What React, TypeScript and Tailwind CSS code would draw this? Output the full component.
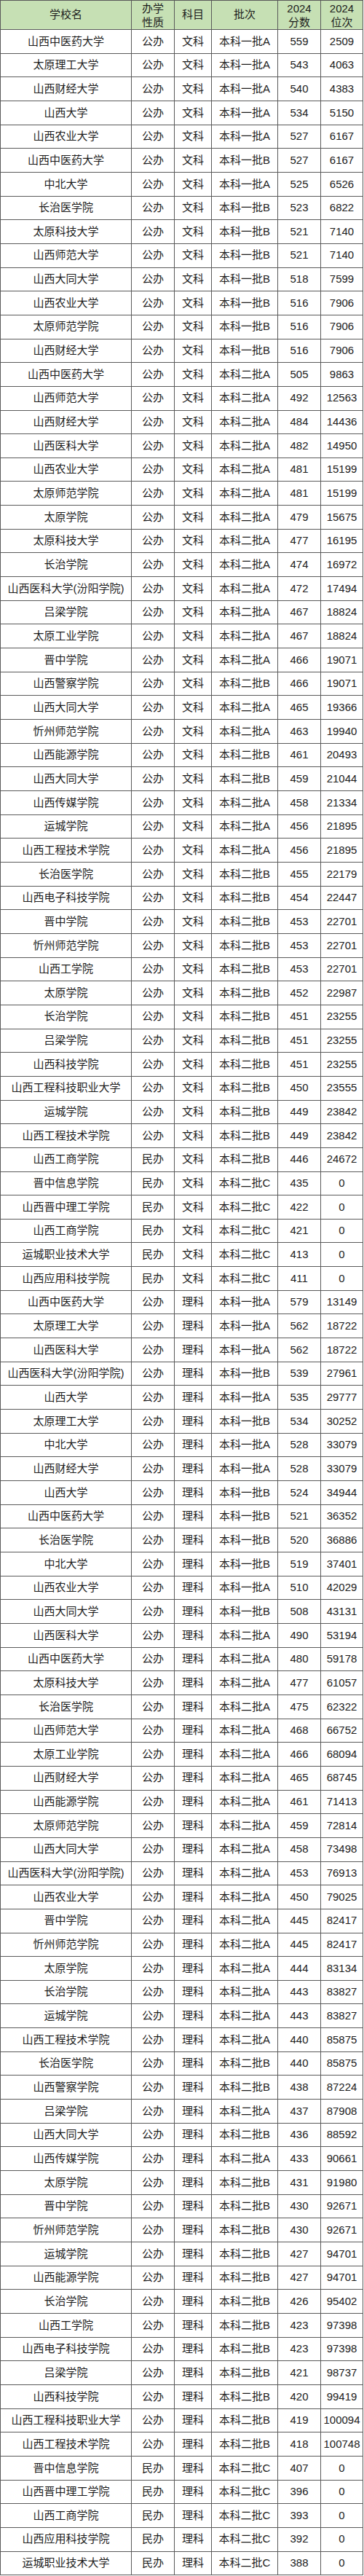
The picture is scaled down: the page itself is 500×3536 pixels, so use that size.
import React from "react";

type Row = [string, string, string, string, string];

const wen: Row[] = [
  ["山西中医药大学", "公办", "本科一批A", "559", "2509"],
  ["太原理工大学", "公办", "本科一批A", "543", "4063"],
  ["山西财经大学", "公办", "本科一批A", "540", "4383"],
  ["山西大学", "公办", "本科一批A", "534", "5150"],
  ["山西农业大学", "公办", "本科一批A", "527", "6167"],
  ["山西中医药大学", "公办", "本科一批B", "527", "6167"],
  ["中北大学", "公办", "本科一批A", "525", "6526"],
  ["长治医学院", "公办", "本科一批B", "523", "6822"],
  ["太原科技大学", "公办", "本科一批B", "521", "7140"],
  ["山西师范大学", "公办", "本科一批B", "521", "7140"],
  ["山西大同大学", "公办", "本科一批B", "518", "7599"],
  ["山西农业大学", "公办", "本科一批B", "516", "7906"],
  ["太原师范学院", "公办", "本科一批B", "516", "7906"],
  ["山西财经大学", "公办", "本科一批B", "516", "7906"],
  ["山西中医药大学", "公办", "本科二批A", "505", "9863"],
  ["山西师范大学", "公办", "本科二批A", "492", "12563"],
  ["山西财经大学", "公办", "本科二批A", "484", "14436"],
  ["山西医科大学", "公办", "本科二批A", "482", "14950"],
  ["山西农业大学", "公办", "本科二批A", "481", "15199"],
  ["太原师范学院", "公办", "本科二批A", "481", "15199"],
  ["太原学院", "公办", "本科二批A", "479", "15675"],
  ["太原科技大学", "公办", "本科二批A", "477", "16195"],
  ["长治学院", "公办", "本科二批A", "474", "16972"],
  ["山西医科大学(汾阳学院)", "公办", "本科二批A", "472", "17494"],
  ["吕梁学院", "公办", "本科二批A", "467", "18824"],
  ["太原工业学院", "公办", "本科二批A", "467", "18824"],
  ["晋中学院", "公办", "本科二批A", "466", "19071"],
  ["山西警察学院", "公办", "本科二批B", "466", "19071"],
  ["山西大同大学", "公办", "本科二批A", "465", "19366"],
  ["忻州师范学院", "公办", "本科二批A", "463", "19940"],
  ["山西能源学院", "公办", "本科二批B", "461", "20493"],
  ["山西大同大学", "公办", "本科二批B", "459", "21044"],
  ["山西传媒学院", "公办", "本科二批A", "458", "21334"],
  ["运城学院", "公办", "本科二批A", "456", "21895"],
  ["山西工程技术学院", "公办", "本科二批A", "456", "21895"],
  ["长治医学院", "公办", "本科二批B", "455", "22179"],
  ["山西电子科技学院", "公办", "本科二批B", "454", "22447"],
  ["晋中学院", "公办", "本科二批B", "453", "22701"],
  ["忻州师范学院", "公办", "本科二批B", "453", "22701"],
  ["山西工学院", "公办", "本科二批B", "453", "22701"],
  ["太原学院", "公办", "本科二批B", "452", "22987"],
  ["长治学院", "公办", "本科二批B", "451", "23255"],
  ["吕梁学院", "公办", "本科二批B", "451", "23255"],
  ["山西科技学院", "公办", "本科二批B", "451", "23255"],
  ["山西工程科技职业大学", "公办", "本科二批B", "450", "23555"],
  ["运城学院", "公办", "本科二批B", "449", "23842"],
  ["山西工程技术学院", "公办", "本科二批B", "449", "23842"],
  ["山西工商学院", "民办", "本科二批B", "446", "24672"],
  ["晋中信息学院", "民办", "本科二批C", "435", "0"],
  ["山西晋中理工学院", "民办", "本科二批C", "422", "0"],
  ["山西工商学院", "民办", "本科二批C", "421", "0"],
  ["运城职业技术大学", "民办", "本科二批C", "413", "0"],
  ["山西应用科技学院", "民办", "本科二批C", "411", "0"],
];

const li: Row[] = [
  ["山西中医药大学", "公办", "本科一批A", "579", "13149"],
  ["太原理工大学", "公办", "本科一批A", "562", "18722"],
  ["山西医科大学", "公办", "本科一批A", "562", "18722"],
  ["山西医科大学(汾阳学院)", "公办", "本科一批B", "539", "27961"],
  ["山西大学", "公办", "本科一批A", "535", "29777"],
  ["太原理工大学", "公办", "本科一批B", "534", "30252"],
  ["中北大学", "公办", "本科一批A", "528", "33079"],
  ["山西财经大学", "公办", "本科一批A", "528", "33079"],
  ["山西大学", "公办", "本科一批B", "524", "34944"],
  ["山西中医药大学", "公办", "本科一批B", "521", "36352"],
  ["长治医学院", "公办", "本科一批B", "520", "36886"],
  ["中北大学", "公办", "本科一批B", "519", "37401"],
  ["山西农业大学", "公办", "本科一批A", "510", "42029"],
  ["山西大同大学", "公办", "本科一批B", "508", "43131"],
  ["山西医科大学", "公办", "本科二批A", "490", "53194"],
  ["山西中医药大学", "公办", "本科二批A", "480", "59178"],
  ["太原科技大学", "公办", "本科二批A", "477", "61057"],
  ["长治医学院", "公办", "本科二批A", "475", "62322"],
  ["山西师范大学", "公办", "本科二批A", "468", "66752"],
  ["太原工业学院", "公办", "本科二批A", "466", "68094"],
  ["山西财经大学", "公办", "本科二批A", "465", "68745"],
  ["山西能源学院", "公办", "本科二批A", "461", "71413"],
  ["太原师范学院", "公办", "本科二批A", "459", "72814"],
  ["山西大同大学", "公办", "本科二批A", "458", "73498"],
  ["山西医科大学(汾阳学院)", "公办", "本科二批A", "453", "76913"],
  ["山西农业大学", "公办", "本科二批A", "450", "79025"],
  ["晋中学院", "公办", "本科二批A", "445", "82417"],
  ["忻州师范学院", "公办", "本科二批A", "445", "82417"],
  ["太原学院", "公办", "本科二批A", "444", "83134"],
  ["长治学院", "公办", "本科二批A", "443", "83827"],
  ["运城学院", "公办", "本科二批A", "443", "83827"],
  ["山西工程技术学院", "公办", "本科二批A", "440", "85875"],
  ["长治医学院", "公办", "本科二批B", "440", "85875"],
  ["山西警察学院", "公办", "本科二批B", "438", "87224"],
  ["吕梁学院", "公办", "本科二批A", "437", "87908"],
  ["山西大同大学", "公办", "本科二批B", "436", "88592"],
  ["山西传媒学院", "公办", "本科二批A", "433", "90661"],
  ["太原学院", "公办", "本科二批B", "431", "91980"],
  ["晋中学院", "公办", "本科二批B", "430", "92671"],
  ["忻州师范学院", "公办", "本科二批B", "430", "92671"],
  ["运城学院", "公办", "本科二批B", "427", "94701"],
  ["山西能源学院", "公办", "本科二批B", "427", "94701"],
  ["长治学院", "公办", "本科二批B", "426", "95402"],
  ["山西工学院", "公办", "本科二批B", "423", "97398"],
  ["山西电子科技学院", "公办", "本科二批B", "423", "97398"],
  ["吕梁学院", "公办", "本科二批B", "421", "98737"],
  ["山西科技学院", "公办", "本科二批B", "420", "99419"],
  ["山西工程科技职业大学", "公办", "本科二批B", "419", "100094"],
  ["山西工程技术学院", "公办", "本科二批B", "418", "100748"],
  ["晋中信息学院", "民办", "本科二批C", "407", "0"],
  ["山西晋中理工学院", "民办", "本科二批C", "396", "0"],
  ["山西工商学院", "民办", "本科二批C", "393", "0"],
  ["山西应用科技学院", "民办", "本科二批C", "392", "0"],
  ["运城职业技术大学", "民办", "本科二批C", "388", "0"],
];

const rows: string[][] = [
  ...wen.map((r) => [r[0], r[1], "文科", r[2], r[3], r[4]]),
  ...li.map((r) => [r[0], r[1], "理科", r[2], r[3], r[4]]),
];

const cell =
  "flex items-center justify-center text-center border-r border-b border-[#5a5a5a] whitespace-nowrap";

export default function App() {
  return (
    <div
      className="w-[500px] bg-white text-[#1c1c1c] text-[15px]"
      style={{ fontFamily: '"Liberation Sans", "Noto Sans CJK SC", sans-serif' }}
    >
      <div className="w-[499px] border-l border-t border-[#5a5a5a] grid grid-cols-[180px_59px_51px_91px_59px_58px]">
        <div className={`${cell} h-[40px] bg-[#c6e0b4]`}>学校名</div>
        <div className={`${cell} h-[40px] bg-[#c6e0b4] leading-[19px]`}>
          办学
          <br />
          性质
        </div>
        <div className={`${cell} h-[40px] bg-[#c6e0b4]`}>科目</div>
        <div className={`${cell} h-[40px] bg-[#c6e0b4]`}>批次</div>
        <div className={`${cell} h-[40px] bg-[#c6e0b4] leading-[19px]`}>
          2024
          <br />
          分数
        </div>
        <div className={`${cell} h-[40px] bg-[#c6e0b4] leading-[19px]`}>
          2024
          <br />
          位次
        </div>
        {rows.map((r, i) => (
          <React.Fragment key={i}>
            {r.map((c, j) => (
              <div key={j} className={`${cell} h-[32.67px]`}>
                {c}
              </div>
            ))}
          </React.Fragment>
        ))}
      </div>
    </div>
  );
}
